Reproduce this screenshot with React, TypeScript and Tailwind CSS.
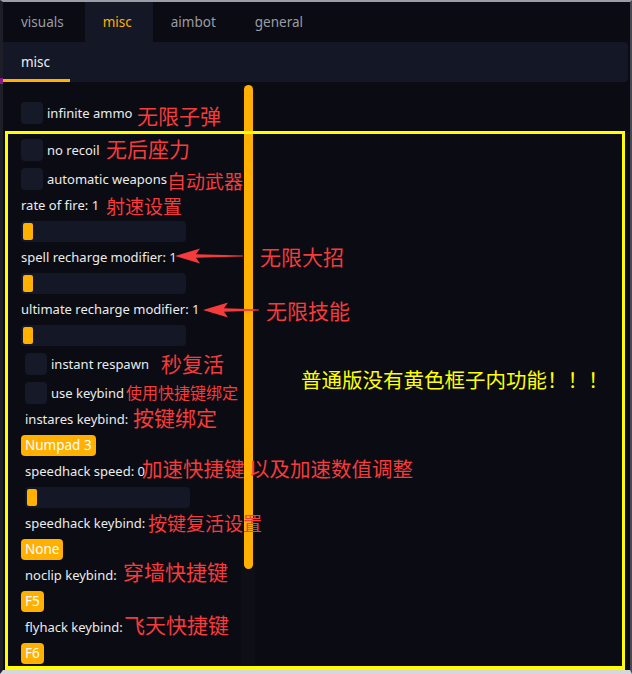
import React from "react";

const ui = { fontFamily: '"Noto Sans", "Open Sans", sans-serif' };
const cjk = { fontFamily: '"Noto Sans CJK SC", "Noto Sans", sans-serif' };

const topTabs = [
  { label: "visuals", active: false },
  { label: "misc", active: true },
  { label: "aimbot", active: false },
  { label: "general", active: false },
];

// red notes drawn over the screenshot: left x, centre y, font size
const notes = [
  { text: "无限子弹", x: 137, y: 116, size: 21 },
  { text: "无后座力", x: 106, y: 149, size: 21 },
  { text: "自动武器", x: 167, y: 180, size: 19 },
  { text: "射速设置", x: 106, y: 205, size: 19 },
  { text: "无限大招", x: 260, y: 257, size: 21 },
  { text: "无限技能", x: 266, y: 311, size: 21 },
  { text: "秒复活", x: 161, y: 364, size: 21 },
  { text: "使用快捷键绑定", x: 126, y: 392, size: 16 },
  { text: "按键绑定", x: 133, y: 418, size: 21 },
  { text: "加速快捷键 以及加速数值调整", x: 142, y: 468, size: 20.5 },
  { text: "按键复活设置", x: 148, y: 522, size: 19 },
  { text: "穿墙快捷键", x: 123, y: 572, size: 21 },
  { text: "飞天快捷键", x: 124, y: 625, size: 21 },
];

const Checkbox = ({ label, indent }: { label: string; indent?: boolean }) => (
  <div className={"flex items-center gap-1 h-[22px] " + (indent ? "ml-1" : "")}>
    <div className="w-[22px] h-[22px] rounded-[4px] bg-[#161927]" />
    <span className="text-[13px] text-[#ececec] leading-[17px]">{label}</span>
  </div>
);

const Label = ({ text, indent }: { text: string; indent?: boolean }) => (
  <div className={"h-[17px] text-[13px] leading-[17px] text-[#ececec] whitespace-nowrap " + (indent ? "ml-1" : "")}>
    {text}
  </div>
);

const Slider = ({ indent }: { indent?: boolean }) => (
  <div className={"w-[165px] h-[21px] rounded-[4px] bg-[#141725] p-[2px] " + (indent ? "ml-1" : "")}>
    <div className="w-[10px] h-[17px] rounded-[2px] bg-[#ffb000]" />
  </div>
);

const KeyButton = ({ text }: { text: string }) => (
  <div className="self-start h-[21px] min-w-[22px] px-[4px] rounded-[4px] bg-[#ffb000] text-white text-[13.5px] leading-[21px] text-center">
    {text}
  </div>
);

const Arrow = ({ x, y, w }: { x: number; y: number; w: number }) => (
  <svg
    className="absolute"
    style={{ left: x, top: y - 8 }}
    width={w}
    height={16}
    viewBox={`0 0 ${w} 16`}
  >
    <polygon points={`0,8 25,0.5 21,6.3 ${w},7.4 ${w},8.6 21,9.7 25,15.5`} fill="#f53b3b" />
  </svg>
);

export default function App() {
  return (
    <div className="relative w-[632px] h-[674px] overflow-hidden" style={ui}>
      <div className="w-full h-full flex flex-col bg-[#0a0b13] border-t-2 border-t-[#9c9ca6] border-l-[3px] border-l-[#1d1e27] border-r-2 border-r-[#4a4a54] border-b-4 border-b-[#d6d6de]">
        {/* top tabs */}
        <div className="flex h-[40px] shrink-0">
          {topTabs.map((t) => (
            <div
              key={t.label}
              className={
                "pl-[18px] pr-[21px] flex items-center text-[13.5px] " +
                (t.active ? "bg-[#141726] text-[#ffb000]" : "text-[#9c9ca4]")
              }
            >
              {t.label}
            </div>
          ))}
        </div>

        {/* sub tabs */}
        <div className="relative flex h-[40px] shrink-0 mr-[2px] bg-[#141726] rounded-r-[4px]">
          <div className="relative px-[18px] flex items-center text-[13.5px] text-[#f0f0f0] w-[67px]">
            misc
            <div className="absolute left-0 right-0 bottom-0 h-[3px] bg-[#ffb000]" />
          </div>
          <div className="absolute left-[-3px] top-[36px] w-[3px] h-[6px] bg-[#8a1a8a]" />
        </div>

        {/* content */}
        <div className="flex flex-1 min-h-0">
          <div className="w-[238px] shrink-0 pl-[18px] pt-[20px] flex flex-col gap-[7px]">
            <Checkbox label="infinite ammo" />
            <div className="mt-[8px]">
              <Checkbox label="no recoil" />
            </div>
            <Checkbox label="automatic weapons" />
            <Label text="rate of fire: 1" />
            <Slider />
            <Label text="spell recharge modifier: 1" />
            <Slider />
            <Label text="ultimate recharge modifier: 1" />
            <Slider />
            <Checkbox label="instant respawn" indent />
            <Checkbox label="use keybind" indent />
            <Label text="instares keybind:" indent />
            <KeyButton text="Numpad 3" />
            <Label text="speedhack speed: 0" indent />
            <Slider indent />
            <Label text="speedhack keybind:" indent />
            <KeyButton text="None" />
            <Label text="noclip keybind:" indent />
            <KeyButton text="F5" />
            <Label text="flyhack keybind:" indent />
            <KeyButton text="F6" />
          </div>
          {/* scrollbar */}
          <div className="w-[14px] mt-[3px] h-[580px] bg-[#0e0f16] flex justify-center">
            <div className="w-[9px] h-[484px] rounded-full bg-[#ffb000]" />
          </div>
          <div className="flex-1" />
        </div>
      </div>

      {/* annotation overlays */}
      <div className="absolute left-[5px] top-[131px] w-[620px] h-[539px] border-[3px] border-b-4 border-[#ffff00]" />
      <div
        className="absolute left-[301px] top-[366px] text-[20.5px] leading-[26px] text-[#ffff00] whitespace-nowrap"
        style={cjk}
      >
        普通版没有黄色框子内功能！！！
      </div>
      {notes.map((n) => (
        <div
          key={n.text}
          className="absolute whitespace-nowrap text-[#f53b3b]"
          style={{ ...cjk, left: n.x, top: n.y - n.size * 0.65, fontSize: n.size, lineHeight: `${Math.round(n.size * 1.3)}px` }}
        >
          {n.text}
        </div>
      ))}
      <Arrow x={175} y={256} w={68} />
      <Arrow x={203} y={310} w={56} />
    </div>
  );
}
